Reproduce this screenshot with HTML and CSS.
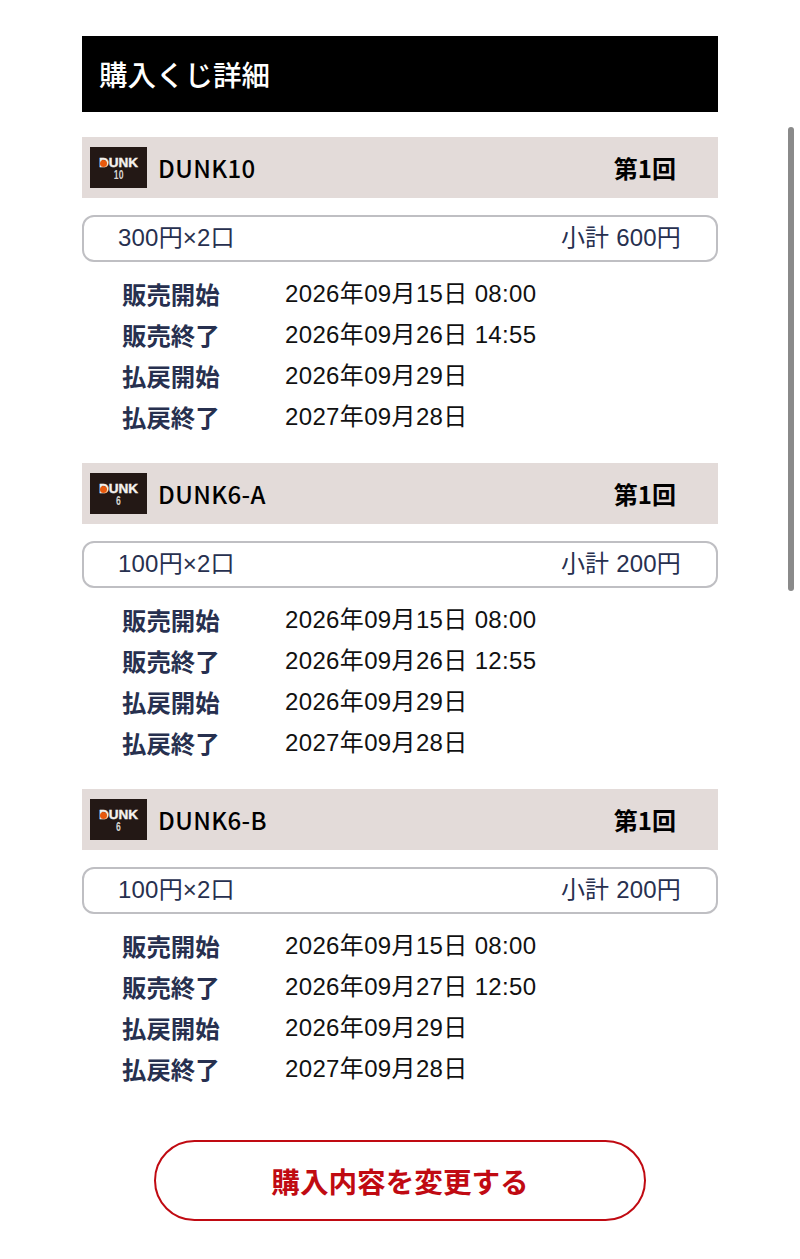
FILE: index.html
```html
<!DOCTYPE html>
<html lang="ja">
<head>
  <meta charset="UTF-8" />
  <meta name="viewport" content="width=device-width, initial-scale=1.0"/>
  <title>購入くじ詳細</title>
  <link rel="stylesheet" href="styles.css">
</head>
<body>
  <main class="page">
    <h1 class="page-title">購入くじ詳細</h1>

    <section class="lot">
      <div class="lot-head">
        <div class="logo"><span class="logo-name">DUNK<i class="logo-dot"></i></span><span class="logo-num">10</span></div>
        <span class="lot-name">DUNK10</span>
        <span class="lot-round">第1回</span>
      </div>
      <div class="lot-price">
        <span class="price-units">300円×2口</span>
        <span class="price-sum">小計 600円</span>
      </div>
      <dl class="dates">
        <div class="date-row"><dt>販売開始</dt><dd>2026年09月15日 08:00</dd></div>
        <div class="date-row"><dt>販売終了</dt><dd>2026年09月26日 14:55</dd></div>
        <div class="date-row"><dt>払戻開始</dt><dd>2026年09月29日</dd></div>
        <div class="date-row"><dt>払戻終了</dt><dd>2027年09月28日</dd></div>
      </dl>
    </section>

    <section class="lot">
      <div class="lot-head">
        <div class="logo"><span class="logo-name">DUNK<i class="logo-dot"></i></span><span class="logo-num">6</span></div>
        <span class="lot-name">DUNK6-A</span>
        <span class="lot-round">第1回</span>
      </div>
      <div class="lot-price">
        <span class="price-units">100円×2口</span>
        <span class="price-sum">小計 200円</span>
      </div>
      <dl class="dates">
        <div class="date-row"><dt>販売開始</dt><dd>2026年09月15日 08:00</dd></div>
        <div class="date-row"><dt>販売終了</dt><dd>2026年09月26日 12:55</dd></div>
        <div class="date-row"><dt>払戻開始</dt><dd>2026年09月29日</dd></div>
        <div class="date-row"><dt>払戻終了</dt><dd>2027年09月28日</dd></div>
      </dl>
    </section>

    <section class="lot">
      <div class="lot-head">
        <div class="logo"><span class="logo-name">DUNK<i class="logo-dot"></i></span><span class="logo-num">6</span></div>
        <span class="lot-name">DUNK6-B</span>
        <span class="lot-round">第1回</span>
      </div>
      <div class="lot-price">
        <span class="price-units">100円×2口</span>
        <span class="price-sum">小計 200円</span>
      </div>
      <dl class="dates">
        <div class="date-row"><dt>販売開始</dt><dd>2026年09月15日 08:00</dd></div>
        <div class="date-row"><dt>販売終了</dt><dd>2026年09月27日 12:50</dd></div>
        <div class="date-row"><dt>払戻開始</dt><dd>2026年09月29日</dd></div>
        <div class="date-row"><dt>払戻終了</dt><dd>2027年09月28日</dd></div>
      </dl>
    </section>

    <div class="actions">
      <button class="change-btn" type="button">購入内容を変更する</button>
    </div>
  </main>
  <div class="scrollbar"></div>
</body>
</html>
```
FILE: styles.css
```css
* {
  box-sizing: border-box;
}

html, body {
  margin: 0;
  padding: 0;
  height: 100%;
  overflow: hidden;
}

body {
  font-family: "Liberation Sans", "Noto Sans CJK JP", sans-serif;
  background: #fff;
  color: #27304f;
}

.page {
  width: 636px;
  margin: 0 0 0 82px;
  padding-top: 36px;
}

.page-title {
  margin: 0 0 25px;
  height: 76px;
  padding-left: 17px;
  background: #000;
  color: #fff;
  font-family: "Noto Sans CJK JP", sans-serif;
  font-size: 28.5px;
  font-weight: 500;
  line-height: 76px;
}

.lot {
  height: 326px;
}

.lot-head {
  display: flex;
  align-items: center;
  height: 61px;
  padding: 0 42px 0 8px;
  background: #e3dbd9;
  color: #000;
  font-family: "Noto Sans CJK JP", sans-serif;
}

.logo {
  display: flex;
  flex-direction: column;
  align-items: center;
  justify-content: center;
  width: 57px;
  height: 41px;
  margin-right: 11px;
  padding-top: 2px;
  background: #231815;
  color: #f4f1ee;
  font-family: "Liberation Sans", sans-serif;
}

.logo-name {
  position: relative;
  height: 11px;
  font-size: 13.5px;
  font-weight: 700;
  line-height: 11px;
  -webkit-text-stroke: 0.4px #f4f1ee;
}

.logo-dot {
  position: absolute;
  left: 1px;
  top: 3px;
  width: 7px;
  height: 7px;
  border-radius: 50%;
  background: #e8590c;
}

.logo-num {
  height: 10px;
  margin-top: 2px;
  color: #d8d5d2;
  font-size: 12px;
  font-weight: 700;
  line-height: 10px;
  transform: scaleX(0.72);
}

.lot-name {
  font-size: 24px;
  font-weight: 500;
  letter-spacing: 0.4px;
}

.lot-round {
  margin-left: auto;
  font-size: 24px;
  font-weight: 700;
}

.lot-price {
  display: flex;
  justify-content: space-between;
  align-items: center;
  height: 47px;
  margin-top: 17px;
  padding: 0 35px 7px 34px;
  border: 2px solid #bfbfc3;
  border-radius: 12px;
  font-size: 24px;
  letter-spacing: 0.2px;
}

.dates {
  margin: 11px 0 0;
  padding-left: 40px;
}

.date-row {
  display: flex;
  align-items: center;
  height: 41px;
}

.date-row dt {
  width: 163px;
  font-family: "Noto Sans CJK JP", sans-serif;
  font-size: 24.4px;
  font-weight: 700;
}

.date-row dd {
  margin: -5px 0 0;
  color: #111;
  font-size: 24px;
  letter-spacing: 0.35px;
}

.actions {
  display: flex;
  justify-content: center;
  margin-top: 25px;
}

.change-btn {
  width: 492px;
  height: 81px;
  border: 2px solid #c00a12;
  border-radius: 41px;
  background: #fff;
  color: #c00a12;
  font-family: "Noto Sans CJK JP", sans-serif;
  font-size: 28.6px;
  font-weight: 700;
}

/* overlay scrollbar */
.scrollbar {
  position: absolute;
  left: 788px;
  top: 127px;
  width: 6px;
  height: 464px;
  border-radius: 3px;
  background: #8a8a8a;
}
```
